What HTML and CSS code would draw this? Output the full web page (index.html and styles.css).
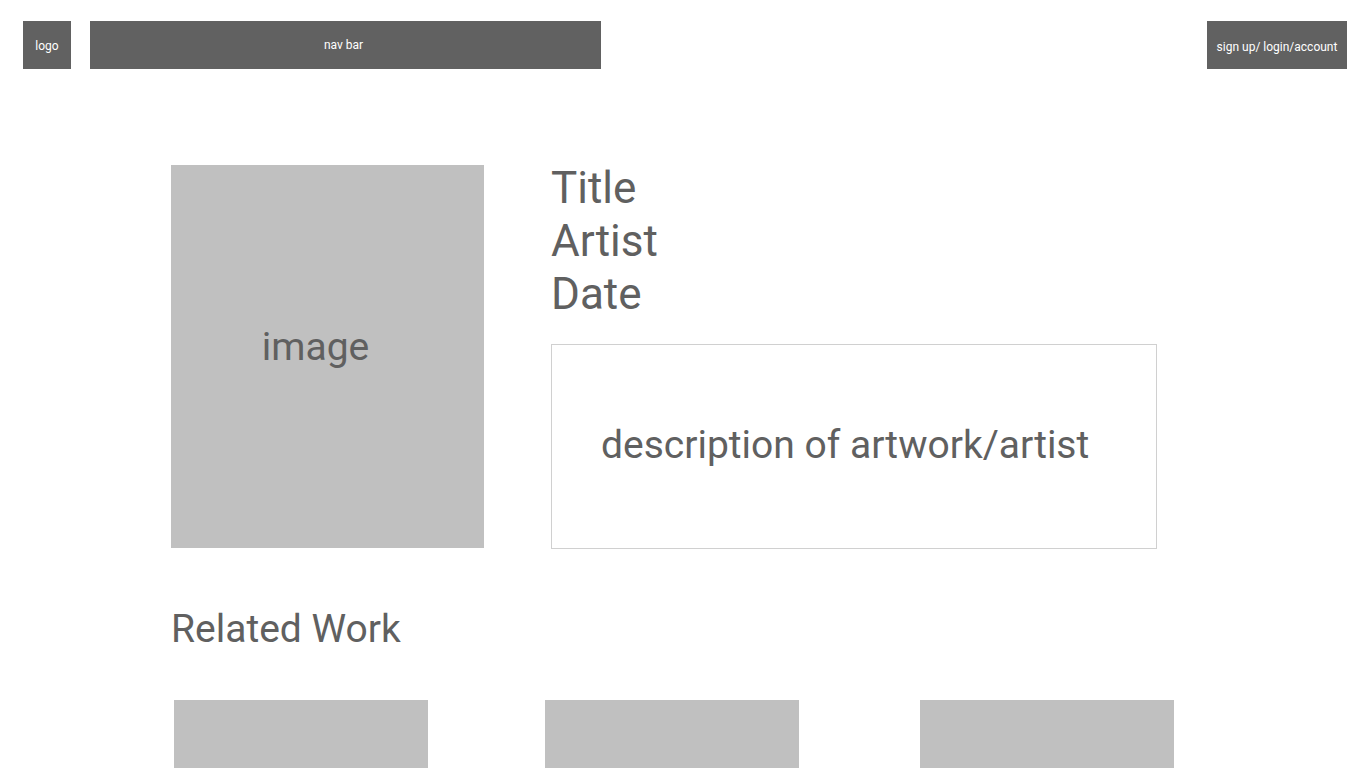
FILE: index.html
```html
<!DOCTYPE html>
<html lang="en">
<head>
<meta charset="utf-8">
<title>Artwork</title>
<link rel="stylesheet" href="styles.css">
</head>
<body>
<header class="topbar">
  <div class="logo">logo</div>
  <nav class="navbar">nav bar</nav>
  <div class="account">sign up/ login/account</div>
</header>
<main class="content">
  <section class="artwork">
    <div class="image">image</div>
    <div class="info">
      <div class="meta">
        <div>Title</div>
        <div>Artist</div>
        <div>Date</div>
      </div>
      <div class="description">description of artwork/artist</div>
    </div>
  </section>
  <h2 class="related-title">Related Work</h2>
  <section class="related">
    <div class="thumb"></div>
    <div class="thumb"></div>
    <div class="thumb"></div>
  </section>
</main>
</body>
</html>
```

FILE: styles.css
```css
html, body {
  margin: 0;
  padding: 0;
  background: #ffffff;
  overflow: hidden;
}
body {
  font-family: Roboto, "Liberation Sans", sans-serif;
  color: #606060;
  width: 1366px;
  height: 768px;
}
.topbar {
  display: flex;
  align-items: flex-start;
  padding: 21px 19px 0 23px;
  height: 48px;
}
.logo, .navbar, .account {
  background: #616161;
  color: #ffffff;
  font-size: 12px;
  height: 48px;
  display: flex;
  align-items: center;
  justify-content: center;
  box-sizing: border-box;
}
.logo {
  width: 48px;
  padding-top: 2px;
}
.navbar {
  width: 511px;
  margin-left: 19px;
  padding-right: 4px;
}
.account {
  width: 140px;
  margin-left: auto;
  padding-top: 3px;
}
.content {
  padding-left: 171px;
  padding-top: 96px;
}
.artwork {
  display: flex;
  align-items: flex-start;
}
.image {
  width: 313px;
  height: 383px;
  background: #c0c0c0;
  font-size: 39px;
  display: flex;
  align-items: center;
  justify-content: center;
  box-sizing: border-box;
  padding-right: 24px;
  padding-bottom: 20px;
}
.info {
  margin-left: 67px;
  display: flex;
  flex-direction: column;
}
.meta {
  font-size: 44px;
  line-height: 53px;
  margin-top: -3px;
  height: 182px;
}
.description {
  width: 606px;
  height: 205px;
  box-sizing: border-box;
  border: 1.5px solid #d0d0d0;
  font-size: 39px;
  display: flex;
  align-items: center;
  padding-left: 49px;
  padding-bottom: 4px;
}
.related-title {
  font-weight: 400;
  font-size: 39px;
  line-height: 46px;
  margin: 57px 0 0 0;
}
.related {
  display: flex;
  margin-top: 48px;
  padding-left: 3px;
}
.thumb {
  width: 254px;
  height: 68px;
  background: #c0c0c0;
}
.thumb + .thumb {
  margin-left: 117px;
}
.thumb:last-child {
  margin-left: 121px;
}
```
